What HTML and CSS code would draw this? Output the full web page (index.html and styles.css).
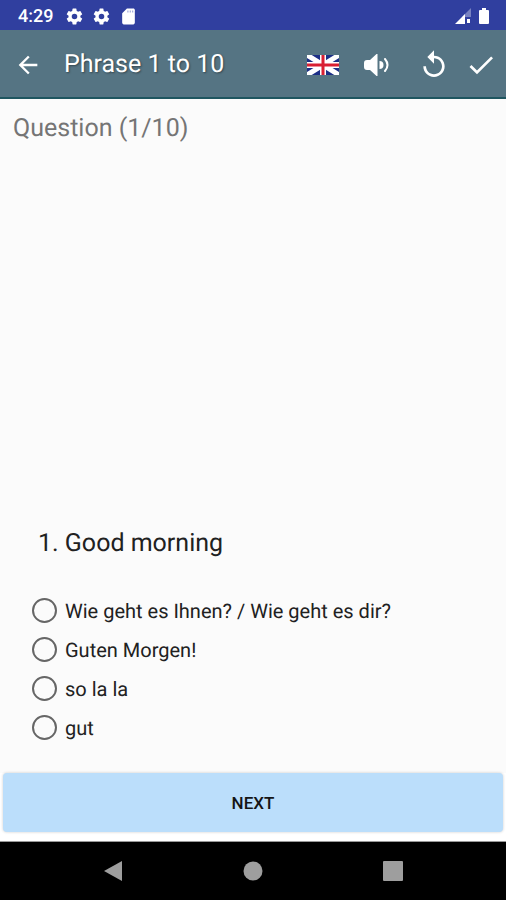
FILE: index.html
```html
<!DOCTYPE html>
<html lang="en">
<head>
    <meta charset="UTF-8">
    <meta name="viewport" content="width=device-width, initial-scale=1.0">
    <title>Phrase 1 to 10</title>
    <link rel="stylesheet" href="styles.css">
</head>
<body>
    <!-- status bar -->
    <div class="status-bar">
        <span class="clock">4:29</span>
        <svg class="status-icon" viewBox="0 0 24 24"><path d="M19.4 13a7.500 7.500 0 0 0 0-2l2.100-1.600a.5.5 0 0 0 .1-.7l-2-3.400a.5.5 0 0 0-.6-.2l-2.500 1a7 7 0 0 0-1.700-1l-.4-2.600a.5.5 0 0 0-.4-.5h-4a.5.5 0 0 0-.5.5l-.4 2.600a7 7 0 0 0-1.700 1l-2.500-1a.5.5 0 0 0-.6.2l-2 3.400a.5.5 0 0 0 .1.700L4.500 11a7.500 7.500 0 0 0 0 2l-2.100 1.600a.5.5 0 0 0-.1.700l2 3.400c.1.200.4.300.6.200l2.500-1a7 7 0 0 0 1.700 1l.4 2.600c0 .300.2.500.5.500h4c.2 0 .4-.2.400-.5l.4-2.600a7 7 0 0 0 1.700-1l2.500 1c.2.100.5 0 .6-.2l2-3.400a.5.5 0 0 0-.1-.7zM12 15.500a3.500 3.500 0 1 1 0-7 3.500 3.500 0 0 1 0 7z"/></svg>
        <svg class="status-icon" viewBox="0 0 24 24"><path d="M19.4 13a7.500 7.500 0 0 0 0-2l2.100-1.600a.5.5 0 0 0 .1-.7l-2-3.400a.5.5 0 0 0-.6-.2l-2.500 1a7 7 0 0 0-1.700-1l-.4-2.600a.5.5 0 0 0-.4-.5h-4a.5.5 0 0 0-.5.5l-.4 2.600a7 7 0 0 0-1.700 1l-2.500-1a.5.5 0 0 0-.6.2l-2 3.400a.5.5 0 0 0 .1.700L4.500 11a7.500 7.500 0 0 0 0 2l-2.100 1.600a.5.5 0 0 0-.1.700l2 3.400c.1.200.4.300.6.200l2.500-1a7 7 0 0 0 1.700 1l.4 2.600c0 .300.2.500.5.500h4c.2 0 .4-.2.400-.5l.4-2.600a7 7 0 0 0 1.700-1l2.500 1c.2.100.5 0 .6-.2l2-3.400a.5.5 0 0 0-.1-.7zM12 15.500a3.500 3.500 0 1 1 0-7 3.500 3.500 0 0 1 0 7z"/></svg>
        <svg class="status-icon" viewBox="0 0 24 24"><path d="M18 2h-8L4 8v12c0 1.100.9 2 2 2h12c1.100 0 2-.9 2-2V4c0-1.100-.9-2-2-2z"/><path fill="#9fa8da" d="M10.500 4.500H12V7h-1.500zM13.500 4.500H15V7h-1.500zM16.500 4.500H18V7h-1.500z"/></svg>
        <div class="status-right">
            <svg class="signal" viewBox="0 0 16 16"><path d="M16 0v9H7z" opacity=".35"/><path d="M10 6v10H0z"/><path d="M12 11h3v4h-3z"/></svg>
            <svg class="battery" viewBox="0 0 10 16"><path d="M3 0h4v2h2q1 0 1 1v12q0 1-1 1H1q-1 0-1-1V3q0-1 1-1h2z"/></svg>
        </div>
    </div>

    <!-- toolbar -->
    <header class="toolbar">
        <button class="icon-btn back" aria-label="Back">
            <svg class="icon" viewBox="0 0 24 24"><path d="M20 11H7.830l5.590-5.590L12 4l-8 8 8 8 1.410-1.410L7.830 13H20z"/></svg>
        </button>
        <h1 class="title">Phrase 1 to 10</h1>
        <button class="icon-btn" aria-label="Language">
            <svg class="flag" viewBox="0 0 32 20">
                <path fill="#1c2f87" d="M0 0h32v20H0z"/>
                <path stroke="#fff" stroke-width="5" d="M0 0l32 20M32 0L0 20"/>
                <path stroke="#fff" stroke-width="6" d="M16 0v20M0 10h32"/>
                <path stroke="#d91f32" stroke-width="3" d="M16 0v20M0 10h32"/>
            </svg>
        </button>
        <button class="icon-btn" aria-label="Listen">
            <svg class="speaker" viewBox="0 0 26 24"><path d="M13.500 1v22h-1L6 17H3q-3 0-3-3v-4q0-3 3-3h3l6.500-6z"/><path d="M15.500 8q4 0 4 4t-4 4z"/><path class="wave" d="M21 6q5 6 0 12"/></svg>
        </button>
        <button class="icon-btn replay" aria-label="Restart">
            <svg class="icon-large" viewBox="0 0 24 24"><path d="M12 5V1L7 6l5 5V7c3.310 0 6 2.690 6 6s-2.690 6-6 6-6-2.690-6-6H4c0 4.420 3.580 8 8 8s8-3.580 8-8-3.580-8-8-8z"/></svg>
        </button>
        <button class="icon-btn done" aria-label="Done">
            <svg class="icon-large" viewBox="0 0 24 24"><path d="M9 16.170L4.830 12l-1.420 1.410L9 19 21 7l-1.410-1.410z"/></svg>
        </button>
    </header>

    <main class="quiz">
        <p class="progress">Question (1/10)</p>
        <fieldset class="question">
            <legend class="question-text">1. Good morning</legend>
            <label class="option"><input type="radio" name="answer">Wie geht es Ihnen? / Wie geht es dir?</label>
            <label class="option"><input type="radio" name="answer">Guten Morgen!</label>
            <label class="option"><input type="radio" name="answer">so la la</label>
            <label class="option"><input type="radio" name="answer">gut</label>
        </fieldset>
        <div class="footer">
            <button class="next-btn">NEXT</button>
        </div>
    </main>

    <!-- system navigation -->
    <nav class="nav-bar">
        <button class="nav-btn" aria-label="Back"><svg viewBox="0 0 20 22"><path d="M19 1v20L1 11z"/></svg></button>
        <button class="nav-btn" aria-label="Home"><svg viewBox="0 0 20 22"><circle cx="10" cy="11" r="9.500"/></svg></button>
        <button class="nav-btn" aria-label="Recent apps"><svg viewBox="0 0 20 22"><rect y="1" width="20" height="20" rx="1"/></svg></button>
    </nav>
</body>
</html>
```

FILE: styles.css
```css
* {
    box-sizing: border-box;
}
body {
    display: flex;
    flex-direction: column;
    min-height: 100vh;
    margin: 0;
    background-color: #fbfbfb;
    font-family: Roboto, "Liberation Sans", sans-serif;
    color: #212121;
    text-rendering: geometricPrecision;
}
button {
    padding: 0;
    border: none;
    background: none;
    font-family: inherit;
    cursor: pointer;
}
svg {
    display: block;
    fill: #fff;
}

/* status bar */
.status-bar {
    display: flex;
    align-items: center;
    height: 30px;
    padding: 2px 17px 0 18px;
    background-color: #303f9f;
    color: #fff;
}
.clock {
    margin-right: 12px;
    font-size: 18px;
    font-weight: 500;
}
.status-icon {
    width: 19px;
    height: 19px;
    margin-right: 8px;
}
.status-right {
    display: flex;
    gap: 8px;
    margin-left: auto;
}
.signal {
    width: 16px;
    height: 16px;
}
.battery {
    width: 10px;
    height: 16px;
}

/* toolbar */
.toolbar {
    display: flex;
    align-items: center;
    height: 69px;
    padding: 2px 8px 0 4px;
    background-color: #557483;
    border-bottom: 2px solid #1f5660;
}
.title {
    flex: 1;
    margin: 0 0 0 12px;
    color: #fff;
    font-size: 25px;
    font-weight: 400;
    text-shadow: 1px 1px 2px rgba(0,0,0,0.4);
}
.icon-btn {
    display: flex;
    align-items: center;
    justify-content: center;
    width: 54px;
    height: 48px;
}
.back {
    width: 48px;
}
.replay {
    width: 60px;
}
.done {
    width: 34px;
}
.icon {
    width: 28px;
    height: 28px;
}
.icon-large {
    width: 32px;
    height: 32px;
}
.flag {
    width: 32px;
    height: 20px;
}
.speaker {
    width: 26px;
    height: 24px;
}
.wave {
    fill: none;
    stroke: #fff;
    stroke-width: 2;
    stroke-linecap: round;
}

/* quiz */
.quiz {
    display: flex;
    flex: 1;
    flex-direction: column;
}
.progress {
    margin: 14px 13px auto;
    color: #757575;
    font-size: 25px;
    line-height: 32px;
}
.question {
    margin: 0 32px 26px;
    padding: 0;
    border: none;
}
.question-text {
    margin-bottom: 31px;
    padding: 0 6px;
    font-size: 25px;
    line-height: 32px;
}
.option {
    display: flex;
    align-items: center;
    gap: 8px;
    min-height: 39px;
    font-size: 20px;
    cursor: pointer;
}
.option input {
    appearance: none;
    width: 25px;
    height: 25px;
    margin: 0;
    border: 2px solid #666;
    border-radius: 50%;
}
.option input:checked {
    border-color: #303f9f;
    background: radial-gradient(#303f9f 50%, transparent 55%);
}
.footer {
    padding: 0 3px 9px;
    border-bottom: 1px solid #999;
    background-color: #fff;
}
.next-btn {
    display: block;
    width: 100%;
    height: 59px;
    border-radius: 4px;
    background-color: #bbdefb;
    box-shadow: 0 0 3px rgba(0,0,0,0.2);
    color: #151515;
    font-size: 17px;
    font-weight: 500;
}

/* system navigation */
.nav-bar {
    display: flex;
    justify-content: center;
    gap: 92px;
    height: 58px;
    background-color: #000;
}
.nav-btn {
    width: 48px;
}
.nav-btn svg {
    width: 20px;
    height: 22px;
    margin: 0 auto;
    fill: #9e9e9e;
}
```
